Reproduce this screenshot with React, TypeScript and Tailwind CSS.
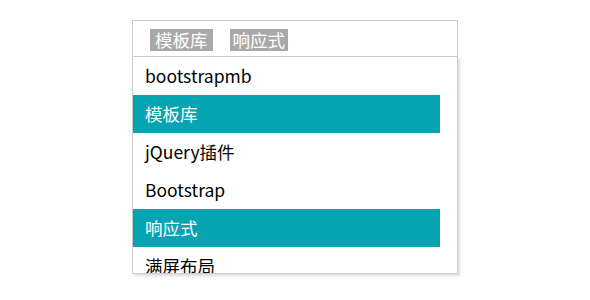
import React from "react";

const items = [
  { label: "bootstrapmb", active: false },
  { label: "模板库", active: true },
  { label: "jQuery插件", active: false },
  { label: "Bootstrap", active: false },
  { label: "响应式", active: true },
  { label: "满屏布局", active: false },
];

export default function App() {
  return (
    <div
      className="w-[590px] h-[300px] bg-white pt-[20px] pl-[132px]"
      style={{ fontFamily: '"Noto Sans CJK SC", "Noto Sans", sans-serif' }}
    >
      <div className="w-[326px]">
        <div className="h-[37px] border border-[#cccccc] flex items-center gap-[17px] pl-[17px] pt-[2px]">
          <span className="bg-[#a9a9a9] text-white text-[17.5px] leading-[22px] px-[5px]">模板库</span>
          <span className="bg-[#a9a9a9] text-white text-[17.5px] leading-[22px] px-[3px]">响应式</span>
        </div>
        <div className="h-[217px] border border-t-0 border-[#cccccc] overflow-hidden shadow-[2px_2px_3px_rgba(0,0,0,0.15)]">
          <div className="w-[307px]">
            {items.map((it) => (
              <div
                key={it.label}
                className={
                  it.active
                    ? "h-[38px] flex items-center pl-[12px] text-[17.5px] bg-[#06a3b3] text-white"
                    : "h-[38px] flex items-center pl-[12px] text-[17.5px] text-black"
                }
              >
                {it.label}
              </div>
            ))}
          </div>
        </div>
      </div>
    </div>
  );
}
